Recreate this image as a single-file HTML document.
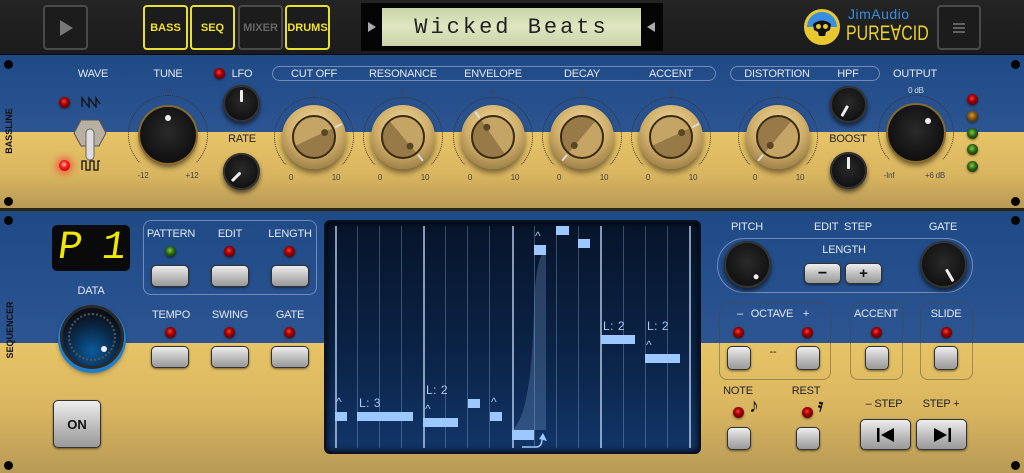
<!DOCTYPE html>
<html><head><meta charset="utf-8">
<style>
*{margin:0;padding:0;box-sizing:border-box}
body{width:1024px;height:473px;overflow:hidden;background:#161616;font-family:"Liberation Sans",sans-serif;position:relative}
.a{position:absolute}
.top{left:0;top:0;width:1024px;height:55px;background:linear-gradient(#242424,#1b1b1b);border-bottom:1px solid #0b0b0b}
.tb{position:absolute;top:5px;width:45px;height:45px;border:2px solid #4a4a4a;border-radius:4px;background:#1c1c1c;color:#eee;font-weight:bold;font-size:11px;display:flex;align-items:center;justify-content:center}
.tb.y{border-color:#e8e030;color:#f0e030}
.panel{left:0;width:1024px;overflow:hidden}
.lbl{position:absolute;transform:translateX(-50%);font-size:11px;color:#e4e8f0;white-space:nowrap;letter-spacing:-.2px}
.dk{color:#222}
.sm{font-size:8px;color:#444}
.smw{font-size:8px;color:#cdd}
.led{position:absolute;width:11px;height:11px;border-radius:50%;background:radial-gradient(circle at 45% 40%,#e44 0,#a00 35%,#500 80%);box-shadow:0 1px 2px rgba(0,0,0,.5)}
.led.on{background:radial-gradient(circle at 45% 40%,#fcc 0,#f22 35%,#b00 80%);box-shadow:0 0 7px 3px rgba(255,40,40,.55)}
.led.g{background:radial-gradient(circle at 45% 40%,#7c4 0,#2a6010 45%,#142a06 85%)}
.led.o{background:radial-gradient(circle at 45% 40%,#c93 0,#7a5008 45%,#3a2604 85%)}
.kb{position:absolute;border-radius:50%;background:radial-gradient(circle at 50% 45%,#2a2a2a 0,#141414 60%,#080808 100%);box-shadow:0 3px 5px rgba(0,0,0,.6),inset 0 0 0 2px #333}
.rot{position:absolute;left:0;top:0;width:100%;height:100%}
.ln{position:absolute;left:50%;width:2.5px;margin-left:-1.25px;background:#eee;border-radius:1px}
.dt{position:absolute;left:50%;width:6px;height:6px;margin-left:-3px;border-radius:50%;background:#eee}
.ring{position:absolute;border-radius:50%;border:1.5px dotted #333;border-bottom-color:transparent}
.gk{position:absolute;width:64px;height:64px;border-radius:50%;background:radial-gradient(circle at 50% 35%,#f3dca0 0,#cfae6a 50%,#7e6232 100%);box-shadow:0 4px 6px rgba(0,0,0,.45)}
.gf{position:absolute;left:10px;top:10px;width:44px;height:44px;border-radius:50%;border:2px solid #3a2c14}
.btn{position:absolute;border-radius:5px;background:linear-gradient(#eee,#b8b8b8 60%,#999);border:1px solid #333;box-shadow:0 1px 2px rgba(0,0,0,.5);display:flex;align-items:center;justify-content:center;color:#111;font-weight:bold}
.box{position:absolute;border:1px solid rgba(180,190,220,.55);border-radius:8px}
.screw{position:absolute;width:9px;height:9px;border-radius:50%;background:#050505}
.vl{position:absolute;top:226px;height:222px;width:1px;background:rgba(150,180,220,.35)}
.vl.b{background:rgba(190,210,240,.7);width:1.5px}
.nt{position:absolute;background:#9cc8ff}
.st{position:absolute;color:#a9c8f0;font-size:12px;letter-spacing:.5px}
</style></head><body>

<div class="a top"></div>
<div class="tb" style="left:43px"><svg width="16" height="18"><polygon points="2,1 15,9 2,17" fill="#777"/></svg></div>
<div class="tb y" style="left:143px">BASS</div>
<div class="tb y" style="left:190px">SEQ</div>
<div class="tb" style="left:238px;color:#666">MIXER</div>
<div class="tb y" style="left:285px">DRUMS</div>
<div class="a" style="left:361px;top:3px;width:302px;height:48px;background:#050505"></div>
<svg class="a" style="left:367px;top:21px" width="10" height="12"><polygon points="1,1 9,6 1,11" fill="#aaa"/></svg>
<svg class="a" style="left:646px;top:21px" width="10" height="12"><polygon points="9,1 1,6 9,11" fill="#aaa"/></svg>
<div class="a" style="left:382px;top:8px;width:259px;height:38px;background:linear-gradient(#c9d4a8,#dfe6c0 50%,#c9d2a6);display:flex;align-items:center;justify-content:center;font-family:'Liberation Mono',monospace;font-size:22px;letter-spacing:3px;color:#222">Wicked Beats</div>
<div class="a" style="left:804px;top:9px;width:36px;height:36px;border-radius:50%;border:3px solid #e8c830;background:linear-gradient(#3a8ee0 50%,#e8c830 50%)"></div>
<svg class="a" style="left:810px;top:15px" width="24" height="24"><path d="M3 9 Q12 2 21 9 L20 15 L16 17 L15 21 L9 21 L8 17 L4 15 Z" fill="#111"/><circle cx="8.5" cy="11.5" r="2.5" fill="#e8c830"/><circle cx="15.5" cy="11.5" r="2.5" fill="#e8c830"/></svg>
<div class="a" style="left:848px;top:6px;color:#3a8ee0;font-size:14px;letter-spacing:.5px">JimAudio</div>
<div class="a" style="left:846px;top:21px;color:#e8d030;font-size:21px;transform:scaleX(.76);transform-origin:left">PURE∀CID</div>
<div class="tb" style="left:937px;width:44px"><svg width="14" height="12"><path d="M1 2H13M1 6H13M1 10H13" stroke="#777" stroke-width="1.5"/></svg></div>

<div class="a panel" style="top:55px;height:153px;background:linear-gradient(#1f4a86,#2c5592 77px,#e7c466 77px,#d9b560 120px,#b79a55 153px)"></div>
<div class="a" style="left:0;top:208px;width:1024px;height:3px;background:#2a2410"></div>
<div class="screw" style="left:4px;top:60px"></div><div class="screw" style="left:4px;top:197px"></div>
<div class="screw" style="left:1011px;top:60px"></div><div class="screw" style="left:1011px;top:197px"></div>
<div class="a" style="left:-16px;top:126px;transform:rotate(-90deg);font-size:9px;font-weight:bold;color:#111;width:50px;text-align:center">BASSLINE</div>

<div class="lbl" style="left:93px;top:68px">WAVE</div>
<div class="lbl" style="left:168px;top:68px">TUNE</div>
<div class="led" style="left:214px;top:68px"></div>
<div class="lbl" style="left:242px;top:68px">LFO</div>
<div class="box" style="left:272px;top:66px;width:444px;height:15px;border-radius:8px"></div>
<div class="lbl" style="left:314px;top:68px">CUT OFF</div>
<div class="lbl" style="left:403px;top:68px">RESONANCE</div>
<div class="lbl" style="left:493px;top:68px">ENVELOPE</div>
<div class="lbl" style="left:582px;top:68px">DECAY</div>
<div class="lbl" style="left:671px;top:68px">ACCENT</div>
<div class="box" style="left:730px;top:66px;width:150px;height:15px;border-radius:8px"></div>
<div class="lbl" style="left:777px;top:68px">DISTORTION</div>
<div class="lbl" style="left:848px;top:68px">HPF</div>
<div class="lbl" style="left:915px;top:68px">OUTPUT</div>

<div class="led" style="left:59px;top:97px"></div>
<svg class="a" style="left:81px;top:96px" width="20" height="12"><path d="M1 11V2L8 11V2L15 11V2L19 8" fill="none" stroke="#111" stroke-width="1.3"/></svg>
<div class="led on" style="left:59px;top:160px"></div>
<svg class="a" style="left:81px;top:159px" width="20" height="12"><path d="M1 11V2H5V11H9V2H13V11H17V2H19" fill="none" stroke="#111" stroke-width="1.3"/></svg>
<svg class="a" style="left:72px;top:118px" width="36" height="44"><polygon points="9,2 27,2 34,15 27,28 9,28 2,15" fill="#b8b0a0" stroke="#555"/><rect x="14" y="11" width="8" height="31" rx="4" fill="#ddd" stroke="#666"/></svg>

<div class="ring" style="left:128px;top:95px;width:80px;height:80px"></div>
<div class="kb" style="left:140px;top:107px;width:56px;height:56px;box-shadow:0 0 0 2px #8a6a2a,0 4px 6px rgba(0,0,0,.6)"><div class="rot"><div class="dt" style="top:8px"></div></div></div>
<div class="lbl sm" style="left:168px;top:86px">0</div>
<div class="lbl sm" style="left:143px;top:171px">-12</div>
<div class="lbl sm" style="left:192px;top:171px">+12</div>

<div class="kb" style="left:223px;top:85px;width:37px;height:37px"><div class="rot"><div class="ln" style="top:5px;height:12px"></div></div></div>
<div class="lbl dk" style="left:242px;top:133px">RATE</div>
<div class="kb" style="left:223px;top:153px;width:37px;height:37px"><div class="rot" style="transform:rotate(225deg)"><div class="ln" style="top:5px;height:12px"></div></div></div>

<div class="ring" style="left:274px;top:97px;width:80px;height:80px"></div>
<div class="gk" style="left:282px;top:105px"><div class="gf" style="background:linear-gradient(155deg,#c4a566 50%,#977a48 50%)"></div><div class="rot" style="transform:rotate(65deg)"><div class="ln" style="top:1px;height:8px;background:#ddd"></div><div class="dt" style="top:17px;background:#5a4524;width:7px;height:7px"></div></div></div>
<div class="lbl sm" style="left:314px;top:88px">5</div><div class="lbl sm" style="left:291px;top:173px">0</div><div class="lbl sm" style="left:336px;top:173px">10</div>

<div class="ring" style="left:363px;top:97px;width:80px;height:80px"></div>
<div class="gk" style="left:371px;top:105px"><div class="gf" style="background:linear-gradient(230deg,#c4a566 50%,#977a48 50%)"></div><div class="rot" style="transform:rotate(140deg)"><div class="ln" style="top:1px;height:8px;background:#ddd"></div><div class="dt" style="top:17px;background:#5a4524;width:7px;height:7px"></div></div></div>
<div class="lbl sm" style="left:403px;top:88px">5</div><div class="lbl sm" style="left:380px;top:173px">0</div><div class="lbl sm" style="left:425px;top:173px">10</div>

<div class="ring" style="left:453px;top:97px;width:80px;height:80px"></div>
<div class="gk" style="left:461px;top:105px"><div class="gf" style="background:linear-gradient(55deg,#977a48 50%,#c4a566 50%)"></div><div class="rot" style="transform:rotate(-35deg)"><div class="ln" style="top:1px;height:8px;background:#ddd"></div><div class="dt" style="top:17px;background:#5a4524;width:7px;height:7px"></div></div></div>
<div class="lbl sm" style="left:493px;top:88px">5</div><div class="lbl sm" style="left:470px;top:173px">0</div><div class="lbl sm" style="left:515px;top:173px">10</div>

<div class="ring" style="left:542px;top:97px;width:80px;height:80px"></div>
<div class="gk" style="left:550px;top:105px"><div class="gf" style="background:linear-gradient(-50deg,#c4a566 50%,#977a48 50%)"></div><div class="rot" style="transform:rotate(-140deg)"><div class="ln" style="top:1px;height:8px;background:#ddd"></div><div class="dt" style="top:17px;background:#5a4524;width:7px;height:7px"></div></div></div>
<div class="lbl sm" style="left:582px;top:88px">5</div><div class="lbl sm" style="left:559px;top:173px">0</div><div class="lbl sm" style="left:604px;top:173px">10</div>

<div class="ring" style="left:631px;top:97px;width:80px;height:80px"></div>
<div class="gk" style="left:639px;top:105px"><div class="gf" style="background:linear-gradient(155deg,#c4a566 50%,#977a48 50%)"></div><div class="rot" style="transform:rotate(65deg)"><div class="ln" style="top:1px;height:8px;background:#ddd"></div><div class="dt" style="top:17px;background:#5a4524;width:7px;height:7px"></div></div></div>
<div class="lbl sm" style="left:671px;top:88px">5</div><div class="lbl sm" style="left:648px;top:173px">0</div><div class="lbl sm" style="left:693px;top:173px">10</div>

<div class="ring" style="left:738px;top:97px;width:80px;height:80px"></div>
<div class="gk" style="left:746px;top:105px"><div class="gf" style="background:linear-gradient(-50deg,#c4a566 50%,#977a48 50%)"></div><div class="rot" style="transform:rotate(-140deg)"><div class="ln" style="top:1px;height:8px;background:#ddd"></div><div class="dt" style="top:17px;background:#5a4524;width:7px;height:7px"></div></div></div>
<div class="lbl sm" style="left:778px;top:88px">5</div><div class="lbl sm" style="left:755px;top:173px">0</div><div class="lbl sm" style="left:800px;top:173px">10</div>

<div class="kb" style="left:830px;top:86px;width:37px;height:37px"><div class="rot" style="transform:rotate(210deg)"><div class="ln" style="top:5px;height:12px"></div></div></div>
<div class="lbl dk" style="left:848px;top:133px">BOOST</div>
<div class="kb" style="left:830px;top:152px;width:37px;height:37px"><div class="rot"><div class="ln" style="top:5px;height:12px"></div></div></div>

<div class="ring" style="left:878px;top:95px;width:76px;height:76px"></div>
<div class="kb" style="left:888px;top:105px;width:56px;height:56px;box-shadow:0 0 0 2px #8a6a2a,0 4px 6px rgba(0,0,0,.6)"><div class="rot" style="transform:rotate(45deg)"><div class="dt" style="top:8px"></div></div></div>
<div class="lbl smw" style="left:916px;top:86px">0 dB</div>
<div class="lbl sm" style="left:889px;top:171px">-Inf</div>
<div class="lbl sm" style="left:935px;top:171px">+6 dB</div>
<div class="led" style="left:967px;top:94px"></div>
<div class="led o" style="left:967px;top:111px"></div>
<div class="led g" style="left:967px;top:128px"></div>
<div class="led g" style="left:967px;top:144px"></div>
<div class="led g" style="left:967px;top:161px"></div>

<div class="a panel" style="top:211px;height:262px;background:linear-gradient(#1f4a86,#2c5592 132px,#e7c466 132px,#d9b560 200px,#b89a55 262px)"></div>
<div class="screw" style="left:4px;top:216px"></div><div class="screw" style="left:4px;top:461px"></div>
<div class="screw" style="left:1011px;top:216px"></div><div class="screw" style="left:1011px;top:461px"></div>
<div class="a" style="left:-20px;top:325px;transform:rotate(-90deg);font-size:9px;font-weight:bold;color:#111;width:60px;text-align:center">SEQUENCER</div>

<div class="a" style="left:52px;top:225px;width:78px;height:46px;background:#0a0a0a;border-radius:5px"></div>
<div class="a" style="left:58px;top:226px;font-family:'Liberation Mono',monospace;font-size:40px;color:#f0e800;transform:skewX(-8deg)">P</div>
<div class="a" style="left:102px;top:226px;font-family:'Liberation Mono',monospace;font-size:40px;color:#f0e800;transform:skewX(-8deg)">1</div>
<div class="lbl" style="left:91px;top:285px">DATA</div>
<div class="a" style="left:60px;top:305px;width:64px;height:64px;border-radius:50%;background:radial-gradient(circle at 50% 75%,#0b5a9c 0,#0a2a4a 45%,#0a0f18 75%);border:3px solid #2a2a2a;box-shadow:0 2px 0 2px #1d7fd0,0 4px 6px rgba(0,0,0,.6)"><div class="a" style="left:5px;top:5px;width:48px;height:48px;border-radius:50%;border:2px dotted #555"></div><div class="dt" style="left:38px;top:38px;margin:0"></div></div>
<div class="btn" style="left:53px;top:400px;width:48px;height:48px;font-size:13px">ON</div>

<div class="box" style="left:143px;top:220px;width:174px;height:75px"></div>
<div class="lbl" style="left:171px;top:228px">PATTERN</div>
<div class="lbl" style="left:230px;top:228px">EDIT</div>
<div class="lbl" style="left:290px;top:228px">LENGTH</div>
<div class="led g" style="left:165px;top:246px"></div>
<div class="led" style="left:224px;top:246px"></div>
<div class="led" style="left:284px;top:246px"></div>
<div class="btn" style="left:151px;top:265px;width:38px;height:22px"></div>
<div class="btn" style="left:211px;top:265px;width:38px;height:22px"></div>
<div class="btn" style="left:271px;top:265px;width:38px;height:22px"></div>
<div class="lbl" style="left:171px;top:309px">TEMPO</div>
<div class="lbl" style="left:230px;top:309px">SWING</div>
<div class="lbl" style="left:290px;top:309px">GATE</div>
<div class="led" style="left:165px;top:327px"></div>
<div class="led" style="left:224px;top:327px"></div>
<div class="led" style="left:284px;top:327px"></div>
<div class="btn" style="left:151px;top:346px;width:38px;height:22px"></div>
<div class="btn" style="left:211px;top:346px;width:38px;height:22px"></div>
<div class="btn" style="left:271px;top:346px;width:38px;height:22px"></div>

<div class="a" style="left:324px;top:220px;width:377px;height:234px;border-radius:6px;background:linear-gradient(#07142a,#0b2448 60%,#12366a);border:2px solid #0a1222;box-shadow:inset 0 0 8px #000"></div>
<div class="vl b" style="left:335px"></div><div class="vl" style="left:357px"></div><div class="vl" style="left:379px"></div><div class="vl" style="left:401px"></div>
<div class="vl b" style="left:423px"></div><div class="vl" style="left:445px"></div><div class="vl" style="left:467px"></div><div class="vl" style="left:489px"></div>
<div class="vl b" style="left:512px"></div><div class="vl" style="left:534px"></div><div class="vl" style="left:556px"></div><div class="vl" style="left:578px"></div>
<div class="vl b" style="left:600px"></div><div class="vl" style="left:623px"></div><div class="vl" style="left:645px"></div><div class="vl" style="left:667px"></div>
<div class="vl b" style="left:689px"></div>
<svg class="a" style="left:512px;top:245px" width="36" height="205"><path d="M0 185 Q20 170 22 60 Q24 10 34 5 L34 185 Z" fill="rgba(140,180,230,.25)"/><path d="M10 202 H24 Q30 202 30 194" fill="none" stroke="#9cc8ff" stroke-width="1.5"/><path d="M27 194 L31 188 L35 196" fill="#9cc8ff"/></svg>
<div class="nt" style="left:335px;top:412px;width:12px;height:9px"></div>
<div class="nt" style="left:357px;top:412px;width:56px;height:9px"></div>
<div class="nt" style="left:423px;top:418px;width:35px;height:9px"></div>
<div class="nt" style="left:468px;top:399px;width:12px;height:9px"></div>
<div class="nt" style="left:490px;top:412px;width:12px;height:9px"></div>
<div class="nt" style="left:512px;top:430px;width:22px;height:10px"></div>
<div class="nt" style="left:534px;top:245px;width:12px;height:10px"></div>
<div class="nt" style="left:556px;top:226px;width:13px;height:9px"></div>
<div class="nt" style="left:578px;top:239px;width:12px;height:9px"></div>
<div class="nt" style="left:601px;top:335px;width:34px;height:9px"></div>
<div class="nt" style="left:645px;top:354px;width:35px;height:9px"></div>
<div class="st" style="left:359px;top:396px">L: 3</div>
<div class="st" style="left:426px;top:383px">L: 2</div>
<div class="st" style="left:603px;top:319px">L: 2</div>
<div class="st" style="left:647px;top:319px">L: 2</div>
<div class="st" style="left:336px;top:395px">^</div>
<div class="st" style="left:425px;top:402px">^</div>
<div class="st" style="left:491px;top:395px">^</div>
<div class="st" style="left:535px;top:229px">^</div>
<div class="st" style="left:646px;top:338px">^</div>

<div class="lbl" style="left:747px;top:221px">PITCH</div>
<div class="lbl" style="left:843px;top:221px">EDIT&nbsp; STEP</div>
<div class="lbl" style="left:943px;top:221px">GATE</div>
<div class="box" style="left:717px;top:238px;width:256px;height:55px;border-radius:28px"></div>
<div class="lbl" style="left:844px;top:244px">LENGTH</div>
<div class="kb" style="left:724px;top:241px;width:47px;height:47px"><div class="rot" style="transform:rotate(145deg)"><div class="dt" style="top:6px;width:5px;height:5px;margin-left:-2.5px"></div></div></div>
<div class="kb" style="left:920px;top:241px;width:47px;height:47px"><div class="rot" style="transform:rotate(150deg)"><div class="ln" style="top:4px;height:14px"></div></div></div>
<div class="btn" style="left:804px;top:263px;width:37px;height:21px;font-size:16px">−</div>
<div class="btn" style="left:845px;top:263px;width:37px;height:21px;font-size:15px">+</div>

<div class="box" style="left:719px;top:303px;width:112px;height:77px;border-color:rgba(80,70,50,.45)"></div>
<div class="box" style="left:850px;top:303px;width:53px;height:77px;border-color:rgba(80,70,50,.45)"></div>
<div class="box" style="left:920px;top:303px;width:53px;height:77px;border-color:rgba(80,70,50,.45)"></div>
<div class="lbl" style="left:740px;top:308px">–</div>
<div class="lbl" style="left:772px;top:308px">OCTAVE</div>
<div class="lbl" style="left:806px;top:308px">+</div>
<div class="lbl" style="left:876px;top:308px">ACCENT</div>
<div class="lbl" style="left:946px;top:308px">SLIDE</div>
<div class="led" style="left:733px;top:327px"></div>
<div class="led" style="left:802px;top:327px"></div>
<div class="led" style="left:871px;top:327px"></div>
<div class="led" style="left:941px;top:327px"></div>
<div class="btn" style="left:727px;top:346px;width:24px;height:24px"></div>
<div class="lbl dk" style="left:773px;top:346px">--</div>
<div class="btn" style="left:796px;top:346px;width:24px;height:24px"></div>
<div class="btn" style="left:865px;top:346px;width:24px;height:24px"></div>
<div class="btn" style="left:934px;top:346px;width:24px;height:24px"></div>

<div class="lbl dk" style="left:738px;top:385px">NOTE</div>
<div class="lbl dk" style="left:806px;top:385px">REST</div>
<div class="led" style="left:733px;top:407px"></div>
<div class="a" style="left:749px;top:395px;font-size:20px;color:#111">♪</div>
<div class="led" style="left:802px;top:407px"></div>
<div class="a" style="left:818px;top:396px;font-size:17px;color:#111;font-weight:bold">𝄿</div>
<div class="btn" style="left:727px;top:427px;width:24px;height:23px"></div>
<div class="btn" style="left:796px;top:427px;width:24px;height:23px"></div>
<div class="lbl dk" style="left:884px;top:398px">– STEP</div>
<div class="lbl dk" style="left:941px;top:398px">STEP +</div>
<div class="btn" style="left:860px;top:419px;width:51px;height:31px"><svg width="20" height="16"><rect x="1" y="1" width="2.5" height="14" fill="#000"/><polygon points="18,1 5,8 18,15" fill="#000"/></svg></div>
<div class="btn" style="left:916px;top:419px;width:51px;height:31px"><svg width="20" height="16"><polygon points="2,1 15,8 2,15" fill="#000"/><rect x="16.5" y="1" width="2.5" height="14" fill="#000"/></svg></div>
</body></html>
